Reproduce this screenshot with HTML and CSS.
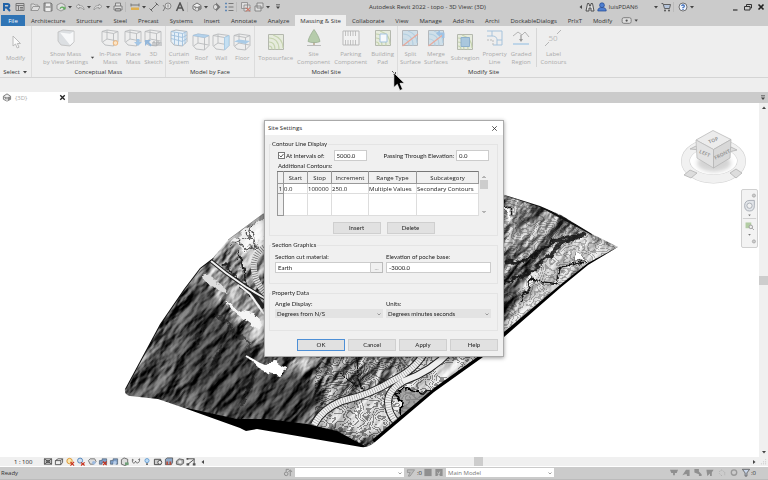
FILE: index.html
```html
<!DOCTYPE html>
<html lang="en">
<head>
<meta charset="utf-8">
<title>Autodesk Revit 2022 - topo - 3D View: (3D)</title>
<link rel="stylesheet" href="styles.css">
</head>
<body>
<svg class="defs" aria-hidden="true">
  <symbol id="arrow" viewBox="0 0 6 6"><path d="M1 2h4L3 4.500z" fill="#444"/></symbol>
  <symbol id="win" viewBox="0 0 10 10"><path d="M1 1.500h8v7H1zM1 3.500h8M3.500 3.500v5M5 5.500h3M5 7h3" fill="none" stroke="#777"/></symbol>
  <symbol id="folder" viewBox="0 0 10 10"><path d="M1 8.500V2h3l1 1h3v1.500M1 8.500l2-4h7l-2 4z" fill="#ddd" stroke="#888" stroke-width=".8"/></symbol>
  <symbol id="save" viewBox="0 0 10 10"><path d="M1 1h7l1 1v7H1z" fill="#aaa" stroke="#666" stroke-width=".8"/><path d="M3 1.500h4v2.500H3zM2.500 6h5v3h-5z" fill="#eee"/></symbol>
  <symbol id="sync" viewBox="0 0 10 10"><path d="M1 3l4-2 4 2v4L5 9 1 7z" fill="#ddd" stroke="#888" stroke-width=".8"/><path d="M3.500 6.500a3 3 0 0 1 5-1l1-1v3H6.500l1-1a2 2 0 0 0-3 .5z" fill="#5fae5a"/></symbol>
  <symbol id="undo" viewBox="0 0 10 10"><path d="M1 4.500L4 2v1.500c4 0 5 2 5 4.500C8 6.500 7 5.500 4 5.500V7z" fill="#ddd" stroke="#888" stroke-width=".7"/></symbol>
  <symbol id="print" viewBox="0 0 10 10"><path d="M2.500 4V1h5v3M1 4h8v4H1zM2.500 6.500h5V9h-5z" fill="#ddd" stroke="#777" stroke-width=".9"/></symbol>
  <symbol id="measure" viewBox="0 0 10 10"><path d="M1 3h8M1 1.500v3M9 1.500v3" stroke="#777" fill="none"/><path d="M1 5.500h8v2.500H1z" fill="#e0b050"/></symbol>
  <symbol id="dim" viewBox="0 0 10 10"><path d="M2 8l6-6M.5 6.500l3 3M6.500.5l3 3" stroke="#666" fill="none"/></symbol>
  <symbol id="tag" viewBox="0 0 10 10"><path d="M1 9l2-3" stroke="#777"/><circle cx="6" cy="4" r="3" fill="#ddd" stroke="#777" stroke-width=".8"/><path d="M6 2.500v3M3 6L1 3" stroke="#777" stroke-width=".8"/></symbol>
  <symbol id="letter" viewBox="0 0 10 10"><path d="M1.500 9L5 1l3.500 8M3 6h4" fill="none" stroke="#555" stroke-width="1.500"/></symbol>
  <symbol id="cube" viewBox="0 0 10 10"><path d="M1 3.500L5 1l4 2.500v3.500L5 9 1 7z" fill="#eee" stroke="#666" stroke-width=".9"/><path d="M1 3.500L5 5l4-1.500V7L5 9z" fill="#888"/><path d="M4 6h2v2.500H4z" fill="#ddd"/></symbol>
  <symbol id="sect" viewBox="0 0 10 10"><circle cx="5" cy="5" r="2.500" fill="#eee" stroke="#777"/><path d="M5 .5L9.500 5 5 9.500" fill="#777"/><circle cx="4.500" cy="5" r="1.800" fill="#ddd"/></symbol>
  <symbol id="thin" viewBox="0 0 10 10"><path d="M1 1.500h2M1 5h2M1 8.500h2" stroke="#5f87b5" stroke-width="1.500"/><path d="M4.500 1.500h5M4.500 5h5M4.500 8.500h5" stroke="#777"/></symbol>
  <symbol id="closewin" viewBox="0 0 10 10"><path d="M.5.500h6v6h-6zM3 3h6v6H3z" fill="#ddd" stroke="#888" stroke-width=".8"/><path d="M5 5.500l4 4M9 5.500l-4 4" stroke="#cf5a45"/></symbol>
  <symbol id="switch" viewBox="0 0 10 10"><path d="M3 1h6v5H3zM1 4h6v5H1z" fill="#ddd" stroke="#777" stroke-width=".8"/></symbol>
  <symbol id="custom" viewBox="0 0 6 6"><path d="M1 .800h4" stroke="#444" stroke-width=".8"/><path d="M1 2.500h4L3 5z" fill="#444"/></symbol>
  <symbol id="binoc" viewBox="0 0 10 10"><path d="M2.500 1.500h1.500l.5 2.500h1L6 1.500h1.500L9 9H6V6H4v3H1z" fill="#ddd" stroke="#444" stroke-width=".9"/></symbol>
  <symbol id="user" viewBox="0 0 10 10"><circle cx="5" cy="3.200" r="2.400" fill="#4f7fd0" stroke="#24478f" stroke-width=".7"/><path d="M.8 9c0-3 2-3.500 4.200-3.500S9.200 6 9.200 9z" fill="#4f7fd0" stroke="#24478f" stroke-width=".7"/></symbol>
  <symbol id="cart" viewBox="0 0 10 10"><path d="M.5 1.500H2l1.500 5h5l1-4h-7" fill="#b5c5dc" stroke="#555" stroke-width=".9"/><circle cx="4" cy="8.500" r="1" fill="#555"/><circle cx="8" cy="8.500" r="1" fill="#555"/></symbol>

  <symbol id="cursor" viewBox="0 0 12 20"><path d="M.8.800v14.800l3.500-3.300 2.500 6.200 2.800-1.200-2.600-6h4.500z" fill="#000" stroke="#fff" stroke-width=".7"/></symbol>
  <symbol id="modify" viewBox="0 0 18 18"><path d="M6 3v10l2.500-2 1.700 4 1.800-.8-1.700-3.700h3.200z" fill="#fafafa" stroke="#b4b4b4" stroke-width=".9"/></symbol>
  <symbol id="mass" viewBox="0 0 18 18"><path d="M1 3l5-2 11 1v11l-4 4-9-1-3-4z" fill="#dcdfe2" stroke="#bcbcbc" stroke-width=".8"/><path d="M3 3.500l10 1.200 3.500-2.200V13L13 16z" fill="#f7f8f9"/></symbol>
  <symbol id="wire" viewBox="0 0 18 18"><path d="M1 2.500L6 1l11 1.500v10L12.500 17 4 16l-3-3.500zM1 2.500l11.500 2L17 2.500M12.500 4.500V17M6 1v9l-4.500 3M6 10l10.500 2" fill="none" stroke="#b8babc" stroke-width=".9"/></symbol>
  <symbol id="inplace" viewBox="0 0 18 18"><use href="#wire"/><circle cx="14.500" cy="14" r="2.300" fill="#fbe5c8" stroke="#efb67a"/></symbol>
  <symbol id="place" viewBox="0 0 18 18"><use href="#wire"/><path d="M12.500 10h3v3H18l-4 4-4-4h2.500z" fill="#a3c6e6"/></symbol>
  <symbol id="sketch" viewBox="0 0 18 18"><use href="#wire"/><path d="M1 11h6L5 13l3 3-1.500 1.500-3-3L1 17z" fill="#94b7da"/><path d="M9 17v-4h2v4m2 0v-4h2v4m2 0v-4" stroke="#a5a8ab" fill="none"/></symbol>
  <symbol id="curtain" viewBox="0 0 18 18"><path d="M1 2.500L6 1l11 1.500v10L12.500 17 4 16l-3-3.500z" fill="#e6f0f8" stroke="#b4b8bc"/><path d="M1 6l11.500 2.500L17 6M1 9.500L12.500 12.500 17 9.500M4.500 3.500v12M8.500 4v12.500M12.500 4.500V17M1 2.500l11.500 2L17 2.500M15 3.500V15" fill="none" stroke="#9fbfdd" stroke-width=".9"/></symbol>
  <symbol id="roof" viewBox="0 0 18 18"><use href="#wire"/><path d="M1 2.500L6 1l11 1.500-4.500 2z" fill="#b5d3ec" stroke="#9fc3e2" stroke-width=".6"/></symbol>
  <symbol id="wall" viewBox="0 0 18 18"><use href="#wire"/><path d="M12.500 4.500L17 2.500v10L12.500 17z" fill="#c4dff2" stroke="#9fc9e8" stroke-width=".7"/></symbol>
  <symbol id="floor" viewBox="0 0 18 18"><use href="#wire"/><path d="M1 8.500L6 6.500l11 1.500-4.500 3z" fill="#aacbe6"/></symbol>
  <symbol id="topo" viewBox="0 0 18 18"><path d="M1.500 1.500h15v15h-15z" fill="#e6ebdd" stroke="#b4b8ae"/><path d="M2 5c6 0 10 4 10 11.500M2 9c4 0 6 3 6 7.500M2 13c2 0 3 1 3 3.500M6 2c6 2 10 6 10 13" fill="none" stroke="#c5d3ae" stroke-width="1.200"/></symbol>
  <symbol id="tree" viewBox="0 0 18 18"><path d="M2 16.500h14" stroke="#bbb"/><path d="M8 12h2v4H8z" fill="#c6b9a5"/><path d="M9 .500C7 3 3.500 9 3 12.500c3 1.500 9 1.500 12 0C14.500 9 11 3 9 .500z" fill="#b6ccab" stroke="#9caf94" stroke-width=".8"/></symbol>
  <symbol id="parking" viewBox="0 0 18 18"><path d="M1 2h16v14H1z" fill="#f2f2f2" stroke="#b9b9b9"/><path d="M3.500 2v5M6 2v5M8.500 2v5M11 2v5M13.500 2v5M3.500 11v5M6 11v5M8.500 11v5M11 11v5M13.500 11v5" stroke="#b4b4b4" stroke-width=".8"/></symbol>
  <symbol id="pad" viewBox="0 0 18 18"><use href="#topo"/><path d="M6 5h7v8H6z" fill="#f6f9fc" stroke="#a4c3df"/></symbol>
  <symbol id="btopo" viewBox="0 0 18 18"><path d="M1.500 1.500h15v15h-15z" fill="#cfdfe9" stroke="#b4b8bc"/><path d="M2 5c6 0 10 4 10 11.500M2 10c4 0 6 3 6 6.500M7 2c6 2 9 6 9 12" fill="none" stroke="#b4cfe1" stroke-width="1.200"/></symbol>
  <symbol id="split" viewBox="0 0 18 18"><use href="#btopo"/><path d="M1.500 17L17 5" stroke="#e8a99b" stroke-width="1.200"/></symbol>
  <symbol id="merge" viewBox="0 0 18 18"><use href="#split"/><path d="M9 4.500L13 1v2.500h4.500V9H15V6h-2v2z" fill="#9fc2e3"/></symbol>
  <symbol id="subreg" viewBox="0 0 18 18"><use href="#topo"/><path d="M5 4.500h8.500v9H5z" fill="#a9c7dd" stroke="#8eb0cc"/></symbol>
  <symbol id="prop" viewBox="0 0 18 18"><path d="M1 2h5v5c5 0 5 3 5 5v4M6 2h10v14M1 7h5M11 11h5M7 16h9" fill="none" stroke="#a6c3dc"/><path d="M1 11h6v5" fill="none" stroke="#bbb" stroke-dasharray="2 1"/></symbol>
  <symbol id="graded" viewBox="0 0 18 18"><path d="M1 7l5-4 4 3 3-3 4 5" fill="none" stroke="#b4b4b4"/><path d="M9 6v5" stroke="#999" stroke-width="1.200"/><path d="M7 10h4l-2 3z" fill="#999"/><path d="M1 15h16" stroke="#aecde6" stroke-width="1.500"/></symbol>

  <symbol id="v1" viewBox="0 0 10 10"><path d="M1 2h8v6H1zM1 2l8 6M9 2L1 8M3 4h4v2H3z" fill="#ddd" stroke="#444" stroke-width=".9"/></symbol>
  <symbol id="v2" viewBox="0 0 10 10"><path d="M1 4l3-2h5v4L7 8.500H1zM1 4h6v4.500M7 4l2-2" fill="#eee" stroke="#444" stroke-width=".9"/></symbol>
  <symbol id="v3" viewBox="0 0 10 10"><circle cx="4.500" cy="4.500" r="3" fill="#fbe7b0" stroke="#d9922b"/><path d="M5.500 5.500l4 4M9.500 5.500l-4 4" stroke="#c8321e" stroke-width="1.300"/></symbol>
  <symbol id="v4" viewBox="0 0 10 10"><circle cx="4" cy="4" r="2.800" fill="#cfe0f2" stroke="#4c7fb5"/><path d="M5 6l4 3.500M9 6L5 9.500" stroke="#c8321e" stroke-width="1.300"/></symbol>
  <symbol id="v5" viewBox="0 0 10 10"><path d="M1 4l2-2h5l1.500 3L7 8H3z" fill="#ddd" stroke="#666" stroke-width=".9"/><circle cx="7" cy="6.500" r="2" fill="#9dbbe0"/></symbol>
  <symbol id="v6" viewBox="0 0 10 10"><path d="M1 4h3V2h5v6H7V6H4v2H1z" fill="#7f9fc8" stroke="#456" stroke-width=".7"/><path d="M5 5l4 4M9 5L5 9" stroke="#c8321e" stroke-width="1.300"/></symbol>
  <symbol id="v7" viewBox="0 0 10 10"><path d="M1 4h3V2h5v6H7V6H4v2H1z" fill="#7f9fc8" stroke="#456" stroke-width=".7"/><circle cx="6" cy="6.500" r="2" fill="#b5cdea"/></symbol>
  <symbol id="v8" viewBox="0 0 10 10"><path d="M1 3l3-2 4 1.500V8L5 9.500 1 8z" fill="#ddd" stroke="#555" stroke-width=".9"/><path d="M5 6h4v3H5z" fill="#6f9f78"/></symbol>
  <symbol id="v9" viewBox="0 0 10 10"><path d="M1 2.500v2c0 3 3 3 3.500 0 .5 3 4 3 4.500-1V2M1 2.500l1.500 1M9 2L7.500 3" fill="none" stroke="#555" stroke-width=".9"/></symbol>
  <symbol id="v10" viewBox="0 0 10 10"><circle cx="5" cy="4" r="2.300" fill="#bcdcf7" stroke="#5a94cc" stroke-width=".9"/><path d="M4 7h2v2H4z" fill="#666"/></symbol>
  <symbol id="v11" viewBox="0 0 10 10"><path d="M1 2.500h7v6H1z" fill="#ccc" stroke="#444"/><circle cx="7" cy="6" r="2.200" fill="#eee" stroke="#444"/></symbol>
  <symbol id="v12" viewBox="0 0 10 10"><path d="M1 2.500l2-1.500h6v5L7.500 8.500H1z" fill="#8fa9c9" stroke="#444" stroke-width=".8"/><path d="M2 5h2v4H2zM5.500 5h2v4h-2z" fill="#b5503c"/></symbol>
  <symbol id="v13" viewBox="0 0 10 10"><path d="M1 4.500L4 2l5 1v4L6 9 1 8z" fill="#aaa" stroke="#555" stroke-width=".9"/><circle cx="5" cy="5.500" r="1.800" fill="#eee"/></symbol>
  <symbol id="v14" viewBox="0 0 10 10"><path d="M1 2h8M8.500 2v7M1 8.500L8 3" fill="none" stroke="#444"/><path d="M0 7h3v2.500H0zM7 7h3v2.500H7zM0 1h2v2H0z" fill="#555"/></symbol>
  <symbol id="s1" viewBox="0 0 10 10"><circle cx="3" cy="6.500" r="2" fill="none" stroke="#888"/><path d="M3 4V1.500h3M7.500 9V3M5.500 4.500L7.500 2l2 2.500" fill="none" stroke="#888"/></symbol>
  <symbol id="s2" viewBox="0 0 10 10"><path d="M1 2h8L4 9H2l2-4H1z" fill="#bbb" stroke="#8d8d8d" stroke-width=".8"/></symbol>
  <symbol id="s3" viewBox="0 0 10 10"><path d="M1 1h8v8H1z" fill="#8f8f8f"/></symbol>
  <symbol id="s4" viewBox="0 0 10 10"><path d="M1 1h8v8H6L5 7 3 9H1z" fill="#8f8f8f"/><path d="M3 5l2 2 1-3" stroke="#ccc" fill="none"/></symbol>
  <symbol id="t1" viewBox="0 0 10 10"><path d="M.5 2h9L8 5.500H6V8H4V5.500H2z" fill="#8f8f8f"/></symbol>
  <symbol id="t2" viewBox="0 0 10 10"><path d="M1 8l4-6h4v7H6V7H4z" fill="#8f8f8f"/></symbol>
  <symbol id="t3" viewBox="0 0 10 10"><path d="M1 1h5v3l3 3v2H6V7L1 5z" fill="#8f8f8f"/></symbol>
  <symbol id="t4" viewBox="0 0 10 10"><path d="M1 2h8L7 5v4H5V6L2 9z" fill="#8f8f8f"/></symbol>
  <symbol id="t5" viewBox="0 0 10 10"><path d="M2 4l3-2 3 3v3M2 6l3 3" fill="none" stroke="#aaa" stroke-dasharray="1.500 1"/></symbol>
  <symbol id="t6" viewBox="0 0 10 10"><circle cx="5" cy="5" r="3" fill="none" stroke="#999" stroke-width="1.500"/></symbol>
  <symbol id="funnel" viewBox="0 0 10 10"><path d="M1 1.500h8L6 5.500V9H4V5.500z" fill="#c9d6ea" stroke="#555" stroke-width=".9"/></symbol>
</svg>

<header class="titlebar">
  <nav class="qat" aria-label="Quick access">
    <button class="ib"><svg viewBox="0 0 10 10"><path d="M2 1v8M2.500 2h3a1.800 1.800 0 0 1 0 3.600h-3M5 5.500L8 9" fill="none" stroke="#1f62a8" stroke-width="2"/></svg></button>
    <button class="ib"><svg><use href="#win"/></svg></button><i class="sep blank"></i>
    <button class="ib"><svg><use href="#folder"/></svg></button>
    <button class="ib"><svg><use href="#save"/></svg></button>
    <button class="ib"><svg><use href="#sync"/></svg></button>
    <button class="ab"><svg><use href="#arrow"/></svg></button>
    <button class="ib"><svg><use href="#undo"/></svg></button>
    <button class="ab"><svg><use href="#arrow"/></svg></button>
    <button class="ib flip"><svg><use href="#undo"/></svg></button>
    <button class="ab"><svg><use href="#arrow"/></svg></button>
    <button class="ib"><svg><use href="#print"/></svg></button><i class="sep"></i>
    <button class="ib"><svg><use href="#measure"/></svg></button>
    <button class="ab"><svg><use href="#arrow"/></svg></button>
    <button class="ib"><svg><use href="#dim"/></svg></button>
    <button class="ib"><svg><use href="#tag"/></svg></button>
    <button class="ib"><svg><use href="#letter"/></svg></button><i class="sep"></i>
    <button class="ib"><svg><use href="#cube"/></svg></button>
    <button class="ab"><svg><use href="#arrow"/></svg></button>
    <button class="ib"><svg><use href="#sect"/></svg></button>
    <button class="ib"><svg><use href="#thin"/></svg></button><i class="sep"></i>
    <button class="ib"><svg><use href="#closewin"/></svg></button>
    <button class="ib"><svg><use href="#switch"/></svg></button>
    <button class="ab"><svg><use href="#arrow"/></svg></button>
    <button class="ib"><svg class="small"><use href="#custom"/></svg></button>
  </nav>
  <h1 class="apptitle">Autodesk Revit 2022 - topo - 3D View: (3D)</h1>
  <div class="account">
    <button class="ab left"><svg><use href="#arrow"/></svg></button>
    <button class="ib"><svg><use href="#binoc"/></svg></button>
    <button class="userbtn"><svg><use href="#user"/></svg>luisPDAN6</button>
    <button class="ab"><svg><use href="#arrow"/></svg></button>
    <button class="ib"><svg><use href="#cart"/></svg></button><i class="sep"></i>
    <button class="ib"><svg viewBox="0 0 10 10"><circle cx="5" cy="5" r="4" fill="#eef3fb" stroke="#555" stroke-width=".8"/><path d="M3.700 4a1.300 1.300 0 1 1 1.300 1.500v.8M5 7v1" fill="none" stroke="#2f62b5" stroke-width="1.200"/></svg></button>
    <button class="ab"><svg><use href="#arrow"/></svg></button>
  </div>
  <div class="winbtns">
    <button class="ib"><svg viewBox="0 0 10 10"><path d="M3 8h4.500" stroke="#333" stroke-width="1.200"/></svg></button>
    <button class="ib"><svg viewBox="0 0 10 10"><path d="M3.500 4V2.500h5v3.500H7M1.500 4.500H7v3.500H1.500z" fill="none" stroke="#333"/></svg></button>
    <button class="ib"><svg viewBox="0 0 10 10"><path d="M2.500 2.500l5 5M7.500 2.500l-5 5" stroke="#222" stroke-width="1.600"/></svg></button>
  </div>
</header>

<nav class="tabs" aria-label="Ribbon tabs">
  <button class="file">File</button><button>Architecture</button><button>Structure</button><button>Steel</button><button>Precast</button><button>Systems</button><button>Insert</button><button>Annotate</button><button>Analyze</button><button class="active">Massing &amp; Site</button><button>Collaborate</button><button>View</button><button>Manage</button><button>Add-Ins</button><button>Archi</button><button>DockableDialogs</button><button>PrIxT</button><button>Modify</button>
  <button class="cam" aria-label="Display options"><svg viewBox="0 0 16 8"><rect x="1" y="1.500" width="8" height="5" rx="1.500" fill="#ddd" stroke="#777" stroke-width=".8"/><circle cx="5" cy="4" r="1" fill="#555"/><path d="M12 3h3l-1.500 2z" fill="#444"/></svg></button>
</nav>

<section class="ribbon">
  <div class="panel">
    <div class="tools"><button class="tool"><svg><use href="#modify"/></svg>Modify</button></div>
    <h2>Select <svg><use href="#arrow"/></svg></h2>
  </div>
  <div class="panel mass">
    <div class="tools">
      <button class="tool"><svg><use href="#mass"/></svg>Show Mass<br>by View Settings</button><svg class="drop"><use href="#arrow"/></svg>
      <button class="tool"><svg><use href="#inplace"/></svg>In-Place<br>Mass</button>
      <button class="tool tight"><svg><use href="#place"/></svg>Place<br>Mass</button>
      <button class="tool tight"><svg><use href="#sketch"/></svg>3D<br>Sketch</button>
    </div>
    <h2>Conceptual Mass</h2>
  </div>
  <div class="panel">
    <div class="tools">
      <button class="tool"><svg><use href="#curtain"/></svg>Curtain<br>System</button>
      <button class="tool tight"><svg><use href="#roof"/></svg>Roof</button>
      <button class="tool tight"><svg><use href="#wall"/></svg>Wall</button>
      <button class="tool"><svg><use href="#floor"/></svg>Floor</button>
    </div>
    <h2>Model by Face</h2>
  </div>
  <div class="panel">
    <div class="tools">
      <button class="tool"><svg><use href="#topo"/></svg>Toposurface</button>
      <button class="tool"><svg><use href="#tree"/></svg>Site<br>Component</button>
      <button class="tool"><svg><use href="#parking"/></svg>Parking<br>Component</button>
      <button class="tool"><svg><use href="#pad"/></svg>Building<br>Pad</button>
    </div>
    <h2>Model Site</h2>
    <div class="launcher"><svg class="glyph" viewBox="0 0 6 6"><path d="M1 1l3.500 3.500M4.500 2v2.500H2" fill="none" stroke="#444" stroke-width=".9"/></svg><svg class="pointer"><use href="#cursor"/></svg></div>
  </div>
  <div class="panel last">
    <div class="tools">
      <button class="tool tight"><svg><use href="#split"/></svg>Split<br>Surface</button>
      <button class="tool"><svg><use href="#merge"/></svg>Merge<br>Surfaces</button>
      <button class="tool tight"><svg><use href="#subreg"/></svg>Subregion</button>
      <button class="tool"><svg><use href="#prop"/></svg>Property<br>Line</button>
      <button class="tool"><svg><use href="#graded"/></svg>Graded<br>Region</button>
      <i class="rule"></i>
      <button class="tool"><svg viewBox="0 0 18 18"><path d="M1 17l4-4M13 5l4-4" stroke="#b5b5b5"/><text x="9" y="12" text-anchor="middle" class="fifty">50</text></svg>Label<br>Contours</button>
    </div>
    <h2>Modify Site</h2>
  </div>
</section>
<div class="options"></div>

<div class="doctabs">
  <div class="doctab"><svg><use href="#cube"/></svg><span>{3D}</span><button aria-label="Close view"><svg viewBox="0 0 10 10"><path d="M2.500 2.500l5 5M7.500 2.500l-5 5" stroke="#222" stroke-width="1.500"/></svg></button></div>
  <button class="tablist" aria-label="Open views"><svg><use href="#custom"/></svg></button>
</div>

<main class="viewport">
  <svg class="scene" viewBox="0 103 759 354" preserveAspectRatio="xMidYMid meet">
    <defs>
      <clipPath id="land"><path d="M125 389L160 324 184 289 200 268 213 258 228 240 263 214 330 165 440 176 508 196 540 206 561 215 592 234 618 247 588 265 560 288 504 337 483 357 434 392 375 442Q369 448 361 447L257 429 246 431 240 428 187 409 158 399 130 396Q124 395 125 389z"/></clipPath>
      <filter id="relief" x="0" y="0" width="1" height="1" color-interpolation-filters="sRGB">
        <feTurbulence type="fractalNoise" baseFrequency=".03 .07" numOctaves="5" seed="11"/>
        <feColorMatrix values="0 0 0 0 0 0 0 0 0 0 0 0 0 0 0 1 0 0 0 0"/>
        <feDiffuseLighting surfaceScale="5" diffuseConstant="1" lighting-color="#fff"><feDistantLight azimuth="250" elevation="30"/></feDiffuseLighting>
      </filter>
      <filter id="lines" x="0" y="0" width="1" height="1" color-interpolation-filters="sRGB">
        <feTurbulence type="fractalNoise" baseFrequency=".03 .045" numOctaves="3" seed="5"/>
        <feColorMatrix values="0 0 0 0 0 0 0 0 0 0 0 0 0 0 0 1 0 0 0 0"/>
        <feComponentTransfer><feFuncA type="discrete" tableValues="0 0 0 0 0 0 0 0 0 0 0 0 0 1 0 0 1 0 0 1 0 0 1 0 0 1 0 0 1 0 0 1 0 0 1 0 0 1 0 0 0 0 0 0 0"/></feComponentTransfer>
      </filter>
      <filter id="soft" x="-.3" y="-.3" width="1.600" height="1.600"><feGaussianBlur stdDeviation="5"/></filter>
      <filter id="rough" x="-.1" y="-.1" width="1.200" height="1.200"><feTurbulence type="fractalNoise" baseFrequency=".12" numOctaves="3" seed="3"/><feDisplacementMap in="SourceGraphic" scale="9" xChannelSelector="R" yChannelSelector="G"/></filter>
      <filter id="cubeshade"><feGaussianBlur stdDeviation="2"/></filter>
    </defs>
    <g clip-path="url(#land)">
      <path d="M110 160h520v300H110z" fill="#8a8a8a"/>
      <g filter="url(#soft)">
        <path d="M120 400L195 270 225 300 258 350 310 375 330 400 300 435z" fill="#505050"/>
        <path d="M195 290l30 30 35 50 60 20-20 35-90-15-30-40z" fill="#404040"/>
        <path d="M228 240l40-30v40l-15 20z" fill="#d8d8d8"/>
        <path d="M205 262l60 45v40l-40-40z" fill="#a5a5a5"/>
        <path d="M320 415l60-25 30-30 60-10 20 5-110 85-20-5-50-15z" fill="#dcdcdc"/>
        <path d="M555 235l35 0 28 12-60 40-45 30-10-15 30-30z" fill="#d4d4d4"/>
        <path d="M500 285l70-35-40 12-30 20v30l20 0 12-20z" fill="#484848"/>
        <path d="M504 325l18-30 20 5-38 40z" fill="#cfcfcf"/>
        <path d="M504 230l25-8 20 5-40 25z" fill="#b8b8b8"/>
      </g>
      <g class="hard" transform="rotate(-48 370 320)"><path d="M50 60h640v520H50z" filter="url(#relief)"/></g>
      <g class="multiply"><path d="M330 345h170v105h-185l0-25z" filter="url(#lines)"/></g>
      <g class="multiply faint"><path d="M504 190h116v150H504z" filter="url(#lines)"/></g>
      <g filter="url(#rough)">
        <path d="M230 240l34-22v20l-12 6-8 8-8-10z" fill="#fff" fill-opacity=".8"/>
        <path d="M232 244l16-8 6-14M245 232l10 12M236 236l8 14 10-4 8 5M250 226l6 20" fill="none" stroke="#222" stroke-width=".8"/>
        <path d="M204 276l6-2 7 10 10 5-2 4-12-5-8-7z" fill="#ddd"/>
        <path d="M225 301l9 5 9 6 11 2 8 10-4 5-11-8-9-5-9-6z" fill="#f5f5f5"/>
        <path d="M248 358l12 6 16-2 12 8-8 5-11-2-10-5z" fill="#fff"/>
        <path d="M240 252l4 24 6 18M224 264l22 24" fill="none" stroke="#222" stroke-width="1.800"/>
        <path d="M215 315l14 6 6 14M232 330l16 12 2 16M205 325l-10 20M222 345l-12 30M255 375l-14 30" fill="none" stroke="#1a1a1a" stroke-width="3" stroke-opacity=".6"/>
        <path d="M504 205l4 10 5 3" fill="none" stroke="#fff" stroke-width="3"/>
        <path d="M504 262l24-2 20-16 15-6 22-5M504 282l18-5 18-12 14-12 5-10 28-9" fill="none" stroke="#101010" stroke-width="3" stroke-opacity=".85"/>
        <path d="M504 200l9 14M530 280l28 4M555 285l6-18 25-5M520 300l12-20" fill="none" stroke="#151515" stroke-width="1.600"/>
        <path d="M572 262l7-10 7 9z" fill="#fff" stroke="#555" stroke-width=".7"/>
        <path d="M396 393l5 10-1 9 4 8 18-14 12-14-14 0-12-3z" fill="#8a8a8a" fill-opacity=".7" stroke="#000" stroke-width="1.600"/>
        <path d="M355 354l4 24 3 16M340 372l18 14" fill="none" stroke="#111" stroke-width="1.500"/>
      </g>
      <g fill="none">
        <path d="M211 261l15 12 20 14 20 12M240 286l14 8 10 14" stroke="#222" stroke-width="4"/>
        <path d="M211 261l15 12 20 14 20 12M240 286l10 8 14 20" stroke="#f4f4f4" stroke-width="2"/>
        <path d="M266 246c-10 6-13 14-12 24s5 16 12 24" stroke="#ddd" stroke-width="6"/>
        <path d="M266 246c-10 6-13 14-12 24s5 16 12 24" stroke="#555" stroke-width="6" stroke-dasharray=".6 1.700"/>
        <path d="M246 356l14 8 14 6" stroke="#fff" stroke-width="2"/>
        <path d="M314 425q8-16 28-24 30-7 50-20 24-12 32-28M398 424q-10-10-10-22 0-12 16-21 28-10 46-30" stroke="#222" stroke-width="8"/>
        <path d="M314 425q8-16 28-24 30-7 50-20 24-12 32-28M398 424q-10-10-10-22 0-12 16-21 28-10 46-30" stroke="#f0f0f0" stroke-width="6"/>
        <path d="M314 425q8-16 28-24 30-7 50-20 24-12 32-28M398 424q-10-10-10-22 0-12 16-21" stroke="#888" stroke-width="6" stroke-dasharray=".5 1.900"/>
      </g>
      <path d="M187 408l50 11 30 0 40 5 30 7 28 15-6 4-120-16-60-20z" fill="#000"/>
      <path d="M618 247L588 263 560 285 504 332 483 353 434 388 372 440 378 446 510 342 592 268z" fill="#000"/>
      <path d="M504 194l36 12 52 28" fill="none" stroke="#111" stroke-width="2"/>
      <path d="M125 389L160 324 184 289 200 268 213 258" fill="none" stroke="#111" stroke-width="2"/>
    </g>
    <path d="M228 240l35-26" stroke="#777" stroke-width=".7"/>

    <g class="viewcube">
      <ellipse cx="713.500" cy="161" rx="28" ry="18" fill="none" stroke="#cfcfcf" stroke-width="9"/>
      <ellipse cx="713.500" cy="161" rx="28" ry="18" fill="none" stroke="#f1f1f1" stroke-width="8"/>
      <ellipse cx="714" cy="163" rx="17" ry="9" fill="#aaa" opacity=".5" filter="url(#cubeshade)"/>
      <path d="M684 175l6-5 7 3-6 5zM730 173l6-4 6 4-6 5zM690 149l6-3 4 4zM731 147l6 3-8 2z" fill="#ddd" stroke="#aaa" stroke-width=".7"/>
      <path d="M696 140l17-9.500 18 9-17.500 10z" fill="#ececec" stroke="#bbb" stroke-width=".8"/>
      <path d="M696 140l17.500 9.500V168L697 158z" fill="#e2e2e2" stroke="#bbb" stroke-width=".8"/>
      <path d="M731 139.500l-17.500 10V168L730 158z" fill="#d8d8d8" stroke="#b5b5b5" stroke-width=".8"/>
      <text transform="translate(714 142) rotate(-22)" text-anchor="middle">TOP</text>
      <text transform="translate(704 155) rotate(24)" text-anchor="middle">LEFT</text>
      <text transform="translate(723 156) rotate(-26)" text-anchor="middle">FRONT</text>
    </g>
  </svg>
  <div class="navbar">
    <svg viewBox="0 0 17 59"><circle cx="13.500" cy="3.500" r="1.800" fill="#ccc" stroke="#999" stroke-width=".7"/><path d="M3 15q0-6 6-6h5v6q0 6-5.500 6T3 15z" fill="#e2e5e9" stroke="#a3a8b0"/><circle cx="8.500" cy="15" r="3" fill="#f2f2f2" stroke="#a3a8b0"/><path d="M7 25h3l-1.500 2z" fill="#777"/><path d="M1 29.500h15" stroke="#ccc"/><path d="M4 34h6.500v6.500H4z" fill="#b3cda4"/><circle cx="10" cy="39" r="2" fill="#eee" stroke="#999"/><path d="M11.500 40.500l2 2" stroke="#999"/><path d="M7 47h3l-1.500 2z" fill="#777"/><circle cx="13.500" cy="55.500" r="1.800" fill="#ccc" stroke="#999" stroke-width=".7"/></svg>
  </div>
  <div class="vscroll">
    <svg class="up"><use href="#arrow"/></svg><i></i><svg><use href="#arrow"/></svg>
  </div>
</main>

<div class="viewctl">
  <span class="scale">1 : 100</span>
  <div class="vicons">
    <svg><use href="#v1"/></svg><svg><use href="#v2"/></svg><svg><use href="#v3"/></svg><svg><use href="#v4"/></svg><svg><use href="#v5"/></svg><svg><use href="#v6"/></svg><svg><use href="#v7"/></svg><svg><use href="#v8"/></svg><svg><use href="#v9"/></svg><svg><use href="#v10"/></svg><svg><use href="#v11"/></svg><svg><use href="#v12"/></svg><svg><use href="#v13"/></svg><svg><use href="#v14"/></svg><svg class="left"><use href="#arrow"/></svg>
  </div>
  <div class="hscroll"><i></i></div>
  <svg class="right"><use href="#arrow"/></svg>
  <svg class="grip" viewBox="0 0 10 10"><path d="M8 2v1M8 5v1M5 5v1M8 8v1M5 8v1M2 8v1" stroke="#bbb" stroke-width="1.500"/></svg>
</div>

<footer class="status">
  <span class="ready">Ready</span>
  <svg><use href="#s1"/></svg>
  <select class="workset" aria-label="Active workset"><option></option></select>
  <div class="mid"><svg><use href="#s2"/></svg><span>:0</span><svg><use href="#s3"/></svg><svg><use href="#s4"/></svg></div>
  <select class="model" aria-label="Design option"><option>Main Model</option></select>
  <div class="sel"><svg><use href="#t1"/></svg><svg><use href="#t2"/></svg><svg><use href="#t3"/></svg><svg><use href="#t4"/></svg><svg><use href="#t5"/></svg><svg><use href="#t6"/></svg><svg><use href="#funnel"/></svg><span>:0</span></div>
</footer>

<div class="layer">
<form class="dialog" role="dialog" aria-labelledby="dt">
  <div class="dhead"><h2 id="dt">Site Settings</h2><button type="button" aria-label="Close"><svg viewBox="0 0 10 10"><path d="M2.500 2.500l5 5M7.500 2.500l-5 5" stroke="#333" stroke-width=".9"/></svg></button></div>
  <fieldset class="contours">
    <legend>Contour Line Display</legend>
    <div class="row">
      <input type="checkbox" id="ai" checked><label for="ai">At Intervals of:</label>
      <input type="text" class="num" aria-label="Interval" value="5000.0">
      <label for="pe" class="push">Passing Through Elevation:</label><input type="text" class="num" id="pe" value="0.0">
    </div>
    <p>Additional Contours:</p>
    <div class="gridwrap">
      <table>
        <colgroup><col class="c0"><col class="c1"><col class="c1"><col class="c2"><col class="c3"><col></colgroup>
        <thead><tr><th></th><th>Start</th><th>Stop</th><th>Increment</th><th>Range Type</th><th>Subcategory</th></tr></thead>
        <tbody><tr><th>1</th><td>0.0</td><td>100000</td><td>250.0</td><td>Multiple Values</td><td>Secondary Contours</td></tr>
        <tr class="fill"><th></th><td></td><td></td><td></td><td></td><td></td></tr></tbody>
      </table>
      <div class="tscroll"><svg viewBox="0 0 6 6"><path d="M1.500 4L3 2.500 4.500 4" fill="none" stroke="#555" stroke-width=".8"/></svg><i></i><svg viewBox="0 0 6 6"><path d="M1.500 2L3 3.500 4.500 2" fill="none" stroke="#555" stroke-width=".8"/></svg></div>
    </div>
    <div class="pair"><button type="button">Insert</button><button type="button">Delete</button></div>
  </fieldset>
  <fieldset class="two">
    <legend>Section Graphics</legend>
    <div><label for="scm">Section cut material:</label><span class="combo"><input type="text" id="scm" value="Earth"><button type="button" class="more">...</button></span></div>
    <div><label for="epb">Elevation of poche base:</label><input type="text" id="epb" value="-3000.0"></div>
  </fieldset>
  <fieldset class="two data">
    <legend>Property Data</legend>
    <div><label for="ad">Angle Display:</label><select id="ad"><option>Degrees from N/S</option></select></div>
    <div><label for="un">Units:</label><select id="un"><option>Degrees minutes seconds</option></select></div>
  </fieldset>
  <div class="actions"><button type="button" class="ok">OK</button><button type="button">Cancel</button><button type="button">Apply</button><button type="button">Help</button></div>
</form>
</div>
</body>
</html>
```

FILE: styles.css
```css
* { box-sizing: border-box; }
html, body { height: 100%; }
body {
  margin: 0;
  display: flex;
  flex-direction: column;
  overflow: hidden;
  background: #fff;
  color: #333;
  font: 6px/8px "Open Sans", "Noto Sans", sans-serif;
}
button, input, select { font: inherit; color: inherit; margin: 0; padding: 0; border: 0; background: none; border-radius: 0; }
h1, h2, p { margin: 0; font: inherit; }
svg { display: block; flex: none; }
.defs { position: absolute; width: 0; height: 0; }

/* title bar */
.titlebar { display: flex; align-items: center; height: 14px; background: #cbcbcb; }
.qat, .account, .winbtns { display: flex; align-items: center; }
.ib { display: flex; justify-content: center; align-items: center; width: 13px; height: 13px; }
.ib svg { width: 10px; height: 10px; }
.ib svg.small { width: 6px; height: 6px; }
.ab { width: 6px; }
.ab svg { width: 6px; height: 6px; }
.flip { transform: scaleX(-1); }
.left { transform: rotate(90deg); }
.right { transform: rotate(-90deg); }
.sep { width: 4px; height: 10px; border-left: 1px solid #bbb; margin-left: 1px; margin-right: -1px; }
.sep.blank { border: 0; width: 2px; margin: 0; }
.apptitle { flex: 1; text-align: center; padding-right: 7px; }
.userbtn { display: flex; align-items: center; gap: 2px; margin-right: 15px; }
.userbtn svg { width: 10px; height: 10px; }
.winbtns { margin-left: 33px; margin-right: 1px; }

/* ribbon */
.tabs { display: flex; gap: 1px; height: 12px; padding-left: 1px; background: #cbcbcb; }
.tabs button { padding: 2px 5px 0; height: 12px; white-space: nowrap; }
.tabs .file { width: 24px; margin: 1px 0 0; padding-top: 1px; height: 11px; background: #2f74b5; color: #fff; }
.tabs .active { background: #eee; margin: 1px 0 0; padding-top: 1px; height: 11px; }
.tabs .cam { padding: 1px 3px; }
.cam svg { width: 18px; height: 9px; }
.ribbon { display: flex; height: 52px; background: #eee; border-bottom: 1px solid #d4d4d4; }
.panel { position: relative; display: flex; flex-direction: column; min-width: 32px; border-right: 1px solid #dcdcdc; }
.panel.last { border: 0; }
.panel.mass { padding-left: 8px; }
.panel h2 { display: flex; justify-content: center; align-items: center; gap: 2px; height: 9px; }
.panel.mass h2 { margin-left: -8px; }
.panel h2 svg { width: 6px; height: 6px; }
.tools { display: flex; height: 41px; padding: 2px 1px 0; }
.tool { height: 38px; padding: 0 2px; color: #aaa; white-space: nowrap; text-align: center; display: block; align-self: flex-start; flex: 1 0 auto; }
.tool.tight { padding: 0 1px; }
.tool svg { width: 18px; height: 18px; margin: 0 auto 3px; }
.drop { width: 5px; height: 5px; margin: 27px 2px 0 0; }
.rule { width: 1px; background: #d6d6d6; margin: 0 2px; }
.fifty { font: 8px "Open Sans", sans-serif; fill: #bbb; }
.launcher { position: absolute; right: 0; bottom: 1px; width: 6px; height: 6px; }
.launcher .glyph { width: 6px; height: 6px; }
.pointer { position: absolute; left: 2px; top: 2px; width: 12px; height: 20px; z-index: 5; }
.options { height: 14px; background: #eee; }

/* document tabs */
.doctabs { display: flex; justify-content: space-between; height: 11px; background: #cbcbcb; }
.doctab { display: flex; align-items: center; width: 68px; padding: 0 1px 0 2px; background: #fff; color: #aaa; }
.doctab > svg { width: 10px; height: 9px; margin-right: 3px; }
.doctab button { margin-left: auto; }
.doctab button svg { width: 9px; height: 9px; }
.tablist { padding-right: 2px; }
.tablist svg { width: 6px; height: 6px; }

/* drawing area */
.viewport { position: relative; flex: 1; min-height: 0; display: flex; }
.scene { flex: 1; min-width: 0; height: 100%; }
.hard { mix-blend-mode: overlay; }
.multiply { mix-blend-mode: multiply; opacity: .4; }
.faint { opacity: .25; }
.viewcube text { font: bold 5px "Open Sans", sans-serif; fill: #999; }
.navbar { position: absolute; right: 10px; top: 86px; width: 17px; height: 59px; border: 1px solid #d0d0d0; border-radius: 2px; background: #f3f3f3; }
.navbar svg { width: 15px; height: 57px; }
.vscroll { display: flex; flex-direction: column; justify-content: space-between; align-items: center; width: 9px; padding: 2px 0; background: #f0f0f0; }
.vscroll svg { width: 6px; height: 6px; }
.vscroll .up { transform: rotate(180deg); }
.vscroll i { width: 9px; height: 9px; background: #cdcdcd; }

/* view controls and status */
.viewctl { display: flex; align-items: center; height: 9px; margin-bottom: 1px; padding: 0 1px 0 14px; background: #f0f0f0; color: #222; }
.scale { width: 29px; }
.vicons { display: flex; gap: 1px; align-items: center; }
.vicons svg { width: 10px; height: 9px; }
.vicons .left { width: 6px; height: 6px; margin-left: 3px; }
.hscroll { flex: 1; height: 9px; display: flex; justify-content: center; }
.hscroll i { width: 9px; background: #cdcdcd; }
.right { width: 6px; height: 6px; margin-right: 3px; }
.grip { width: 7px; height: 7px; }
.status { display: flex; align-items: center; height: 13px; padding: 0 12px 1px 0; background: #cbcbcb; border-bottom: 1px solid #bbb; }
.status svg { width: 10px; height: 9px; }
.ready { width: 283px; padding-left: 1px; }
.workset { width: 109px; margin-left: 2px; }
.mid { display: flex; align-items: center; gap: 1px; padding: 0 2px; }
.model { width: 108px; }
.sel { display: flex; align-items: center; gap: 2px; margin-left: auto; }
.sel span { margin-left: -2px; }
select { appearance: none; background: url("data:image/svg+xml,%3Csvg xmlns='http://www.w3.org/2000/svg' viewBox='0 0 6 6'%3E%3Cpath d='M1.5 2.5L3 4l1.500-1.500' fill='none' stroke='%23777' stroke-width='.7'/%3E%3C/svg%3E") no-repeat right 1px center / 6px 6px #e3e3e3; }
.status select { height: 9px; padding: 0 2px; background-color: #fff; color: #777; }

/* dialog */
.layer { position: fixed; inset: 0; display: grid; place-items: center; padding-bottom: 3px; pointer-events: none; }
.dialog { pointer-events: auto; width: 240px; background: #f0f0f0; border: 1px solid #aaa; box-shadow: 0 1px 4px rgba(0, 0, 0, .4); color: #222; font: 6px/8px Lato, "Open Sans", sans-serif; }
.dhead { display: flex; justify-content: space-between; align-items: center; height: 14px; padding: 0 4px 0 3px; background: #fff; font-family: "Open Sans", sans-serif; }
.dhead svg { width: 9px; height: 9px; }
fieldset { min-width: 0; margin: 5px 5px 0 4px; padding: 0 8px; border: 1px solid #e4e4e4; }
legend { margin-left: -7px; padding: 0 1px; height: 8px; }
.row { display: flex; align-items: center; height: 11px; margin-top: 2px; }
.row input[type=checkbox] { appearance: none; width: 7px; height: 7px; margin-right: 1px; border: 1px solid #777; background: #fff url("data:image/svg+xml,%3Csvg xmlns='http://www.w3.org/2000/svg' viewBox='0 0 6 6'%3E%3Cpath d='M1 3l1.500 1.500L5 1.500' fill='none' stroke='%23333' stroke-width='.8'/%3E%3C/svg%3E") center / 6px 6px; }
.row label { white-space: nowrap; }
input[type=text] { height: 11px; min-width: 0; padding: 0 2px; border: 1px solid #ccc; background: #fff; }
.row .num { width: 33px; margin-left: 9px; }
.row .push { margin-left: auto; }
.row #pe { margin-left: 2px; }
.contours { height: 96px; }
.contours p { height: 9px; line-height: 9px; margin-bottom: 1px; }
.gridwrap { display: flex; height: 45px; margin-left: -1px; font-family: "Open Sans", sans-serif; }
table { flex: 1; table-layout: fixed; border-collapse: collapse; background: #fff; height: 45px; }
th, td { padding: 0; font-weight: normal; border: 1px solid #ddd; white-space: nowrap; overflow: hidden; text-align: left; height: 10px; line-height: 8px; }
th { background: #f0f0f0; border-color: #999; text-align: center; }
thead th { height: 12px; border-top-color: #777; }
.fill td, .fill th { height: auto; }
.c0 { width: 6px; } .c1 { width: 24px; } .c2 { width: 37px; } .c3 { width: 48px; }
.tscroll { display: flex; flex-direction: column; align-items: center; width: 10px; padding: 3px 0 1px; }
.tscroll svg { width: 6px; height: 6px; }
.tscroll i { width: 8px; height: 9px; background: #cdcdcd; }
.tscroll svg:last-child { margin-top: auto; }
.dialog .pair button, .actions button { width: 48px; height: 12px; border: 1px solid #cfcfcf; background: #e1e1e1; }
.pair { display: flex; justify-content: center; gap: 6px; margin-top: 6px; }
.two { display: grid; grid-template-columns: 108px 1fr; column-gap: 3px; height: 43px; padding: 4px 6px 0 5px; }
.two.data { height: 42px; padding-top: 3px; }
.two legend { margin-left: -4px; }
.two label { display: block; height: 9px; }
.two input, .two select { width: 100%; }
.two select { height: 9px; padding: 0 2px; }
.combo { display: flex; }
.combo input { flex: 1; }
.more { width: 12px; height: 11px; border: 1px solid #bbb; border-left: 0; background: #f0f0f0; color: #999; line-height: 6px; }
.actions { display: flex; justify-content: flex-end; gap: 3px; padding: 8px 5px 5px; }
.dialog .actions .ok { border: 1px solid #4d8fd6; }
```
